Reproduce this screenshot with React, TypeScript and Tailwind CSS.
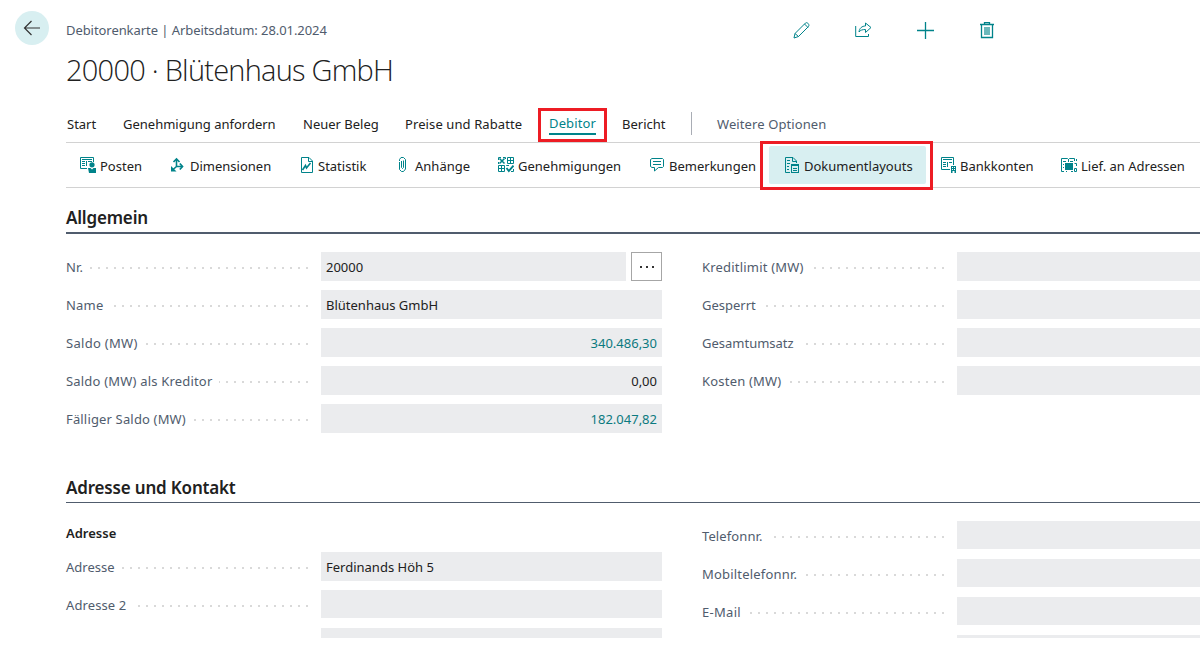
import type { ReactNode } from "react";

const Svg = ({ w, h, children }: { w: number; h: number; children: ReactNode }) => (
  <svg width={w} height={h} viewBox={`0 0 ${w} ${h}`} fill="none" stroke="#00838a" className="block shrink-0">
    {children}
  </svg>
);

const PostenIcon = () => (
  <Svg w={17} h={16}>
    <path d="M7 11.5H0.5V0.5H13.5V5" />
    <path d="M2 2.5h10M2 4.5h3M2 6.5h3M2 8.5h3M6.5 4v5M8 4.5h4" />
    <circle cx="12" cy="7.800" r="2.600" fill="#00838a" stroke="none" />
    <path d="M8 11h2.500l1.500 1.500 1.500-1.500h2.500V16H9z" fill="#00838a" stroke="none" />
  </Svg>
);

const DimensionIcon = () => (
  <Svg w={14} h={16}>
    <path d="M6.500 9.500V3M6.500 9.500L2.500 13M6.500 9.500H12" strokeWidth="1.600" />
    <path d="M3.500 5L6.500 2L9.500 5M9.800 6.500L12.500 9.500L9.800 12.500" strokeWidth="1.700" />
    <path d="M1 9V14.500H6.500Z" fill="#00838a" stroke="none" />
  </Svg>
);

const StatistikIcon = () => (
  <Svg w={13} h={16}>
    <path d="M0.500 0.500H8L11.500 4V15.500H0.500Z" />
    <path d="M7.500 0.500V4.500H11.500" />
    <path d="M1.500 13L4.500 8.500L5.500 11L9.500 6" strokeWidth="1.600" />
  </Svg>
);

const ClipIcon = () => (
  <Svg w={8} h={16}>
    <path d="M0.500 4V2.500L2 0.500H4.500L6.500 2.500V12L4.500 14.500H2.500L0.500 12.500V5M2.500 4V10.500L3.500 11.500L4.500 10.500V3.500" />
  </Svg>
);

const GenehmigungIcon = () => (
  <Svg w={16} h={16}>
    <path d="M0.500 3V0.500H3M5 0.500H7.500V2M0.500 5V7" />
    <path d="M1.500 1.500L6.500 6.500M6.500 1.500L1.500 6.500" strokeWidth="1.500" />
    <path d="M9.500 0.500H15.500V6.500H9.500ZM12.500 0.500V7M9 3.500H16" />
    <path d="M0.500 8.500H6.500V14.500H0.500ZM1 11.500H6M3.500 9V14" />
    <path d="M8.500 11L10.800 14L15.500 8.500" strokeWidth="1.900" />
    <path d="M8.500 9V8.500H11M15.500 12V14.500H13" />
  </Svg>
);

const KommentarIcon = () => (
  <Svg w={15} h={16}>
    <path d="M2 1.500H12.500L13.500 2.500V9.500L12.500 10.500H8.500L4.500 14V10.500H2L0.500 9.500V2.500Z" />
    <path d="M3 4.500H11M3 7.500H11" />
  </Svg>
);

const LayoutIcon = () => (
  <Svg w={15} h={16}>
    <path d="M5 15.500H0.500V0.500H8L11.500 4V6M7.500 0.500V4.500H11.500M2 3.500H5M2 6.500H5M2 9.500H4M2 12.500H4" />
    <rect x="6.500" y="7.500" width="7" height="8" />
    <path d="M6 8.500H14M8 11.500H12M8 13.500H12" />
  </Svg>
);

const BankIcon = () => (
  <Svg w={16} h={16}>
    <path d="M9 12.500H0.500V0.500H12.500V8M2 2.500H11M2 5.500H5M2 7.500H5M2 9.500H5M6.500 5V10M8 5.500H11" />
    <path d="M10 16V9H15V16H13.500V14H11.500V16Z" fill="#00838a" stroke="none" />
    <path d="M11.500 10V13M13.500 10V13" stroke="#fff" strokeDasharray="1 1" />
  </Svg>
);

const LieferIcon = () => (
  <Svg w={17} h={16}>
    <path d="M3 14.500H0.500V1.500H6.500L7.500 2.500L8.500 1.500H13.500V4M2 4.500H5M2 7.500H3M2 10.500H3M9 4.500H12M7.500 2V5" />
    <rect x="4" y="6" width="8" height="7" fill="#00838a" stroke="none" />
    <path d="M5 14.500H6M10 14.500H12M13.500 6.500H15.500V9M13.500 11.500H15.500V14.500H13.500ZM15.500 2V4" />
  </Svg>
);

const tabs = [
  { label: "Start", box: "w-[56px]" },
  { label: "Genehmigung anfordern", box: "w-[180px]" },
  { label: "Neuer Beleg", box: "w-[102px]" },
  { label: "Preise und Rabatte", box: "w-[133px] tracking-[0.1px]" },
];

const Action = ({ icon, box, gap, label }: { icon: ReactNode; box: string; gap: string; label: string }) => (
  <div className={`flex h-[38px] shrink-0 items-center ${box} ${gap}`}>
    {icon}
    <span className="pt-[2px]">{label}</span>
  </div>
);

const Field = ({ label, value, link, right, lookup, short, spacing = "" }: {
  label: string; value?: string; link?: boolean; right?: boolean; lookup?: boolean; short?: boolean; spacing?: string;
}) => (
  <div className="flex h-[38px] shrink-0 items-start">
    <div
      className={`flex h-[29px] w-[243px] shrink-0 items-center ${label ? "bg-[linear-gradient(90deg,#d9d9d9_2px,transparent_2px)] bg-[length:8px_2px] bg-[position:0_15px] bg-repeat-x" : ""}`}
    >
      <span className={`whitespace-nowrap bg-white pr-[7px] text-[#505c6d] ${spacing}`}>{label}</span>
    </div>
    <div className={`ml-3 flex flex-1 items-center bg-[#ebecee] px-[5px] ${short ? "h-[28px]" : "h-[29px]"} ${right ? "justify-end" : ""} ${link ? "text-[#0b7a80]" : "text-[#212121]"}`}>
      {value}
    </div>
    {lookup && (
      <div className="ml-[5px] flex h-[29px] w-[31px] items-center justify-center gap-1 border border-[#a6a6a6]">
        <i className="size-[2px] bg-[#333]" />
        <i className="size-[2px] bg-[#333]" />
        <i className="size-[2px] bg-[#333]" />
      </div>
    )}
  </div>
);

export default function App() {
  return (
    <div className="h-[648px] w-[1200px] overflow-hidden bg-white font-['Noto_Sans',sans-serif] text-[13px] leading-[18px] text-[#212121]">
      <div className="flex h-[638px] flex-col overflow-hidden">
        <header className="flex h-[105px] shrink-0">
          <div className="ml-[15px] mt-[11px] flex size-[34px] items-center justify-center rounded-full bg-[#d8eff1]">
            <svg width="18" height="16" viewBox="0 0 18 16" fill="none" stroke="#333" strokeWidth="1.200">
              <path d="M17 8H1.500M8.500 1L1.500 8L8.500 15" />
            </svg>
          </div>
          <div className="ml-[17px] w-[727px] pt-[21px]">
            <div className="tracking-[-0.065px] text-[#505c6d]">Debitorenkarte | Arbeitsdatum: 28.01.2024</div>
            <h1 className="mt-[11px] whitespace-nowrap font-['Open_Sans',sans-serif] text-[29px] font-light leading-[40px] tracking-[-0.76px]">20000 · Blütenhaus GmbH</h1>
          </div>
          <div className="flex h-[60px] items-center gap-[45px]">
            <Svg w={17} h={17}>
              <path d="M1 16L2 11.500L12.500 1C14 -0.300 17 2.500 15.500 4.500L5.500 14.500ZM11.500 2L15 5.500M2 11.500L5.500 14.500" />
            </Svg>
            <Svg w={17} h={17}>
              <path d="M0.700 4V14.500H13.500V12" />
              <path d="M4 10C4.500 6 7 4 10.500 4V1L16 5.500L10.500 10.500V7.500C7.500 7.500 5.500 8 4 10Z" />
            </Svg>
            <Svg w={17} h={17}><path d="M8.500 0V17M0 8.500H17" strokeWidth="1.300" /></Svg>
            <Svg w={17} h={17}>
              <path d="M1 2.500H15M5.500 2V0.700H10.500V2M2.500 3V15.500H13.500V3" strokeWidth="1.300" />
              <rect x="5" y="5" width="6" height="8" fill="#6bb8bb" stroke="none" />
            </Svg>
          </div>
        </header>

        <nav className="ml-[66px] flex h-[38px] shrink-0 items-center border-b border-[#d2d2d2] pl-px whitespace-nowrap">
          {tabs.map((t) => <div key={t.label} className={`shrink-0 ${t.box}`}>{t.label}</div>)}
          <div className="flex h-[34px] w-[69px] items-end justify-center self-end border-3 border-[#ed1c24] pb-[4px]">
            <span className="border-b-2 border-[#00838a] leading-[20px] tracking-[0.1px] text-[#00838a]">Debitor</span>
          </div>
          <div className="ml-[15px] w-[69px]">Bericht</div>
          <div className="h-[23px] w-px bg-[#a9adb5]" />
          <div className="ml-[25px] tracking-[0.1px] text-[#505c6d]">Weitere Optionen</div>
        </nav>

        <div className="ml-[66px] flex h-[45px] shrink-0 items-center border-b border-[#d2d2d2] pl-[14px] whitespace-nowrap">
          <Action icon={<PostenIcon />} box="w-[90px]" gap="gap-[3px]" label="Posten" />
          <Action icon={<DimensionIcon />} box="w-[131px]" gap="gap-[6px]" label="Dimensionen" />
          <Action icon={<StatistikIcon />} box="w-[98px]" gap="gap-[4px]" label="Statistik" />
          <Action icon={<ClipIcon />} box="w-[99px]" gap="gap-[8px]" label="Anhänge" />
          <Action icon={<GenehmigungIcon />} box="w-[152px]" gap="gap-[4px]" label="Genehmigungen" />
          <Action icon={<KommentarIcon />} box="w-[110px]" gap="gap-[4px]" label="Bemerkungen" />
          <div className="z-10 -my-1 flex h-[49px] w-[173px] shrink-0 items-start border-3 border-[#ed1c24] bg-white pl-[6px] pt-[2px]">
            <div className="flex h-[38px] w-[157px] items-center rounded-[2px] bg-[#d8eff1] pl-4">
              <Action icon={<LayoutIcon />} box="" gap="gap-[4px]" label="Dokumentlayouts" />
            </div>
          </div>
          <Action icon={<BankIcon />} box="w-[128px] pl-[8px]" gap="gap-[3px]" label="Bankkonten" />
          <Action icon={<LieferIcon />} box="" gap="gap-[3px]" label="Lief. an Adressen" />
        </div>

        <section className="ml-[66px] shrink-0">
          <h2 className="flex h-[46px] items-end border-b-2 border-[#505c6d] pb-[2px] text-[17px] font-semibold leading-6 tracking-[-0.18px]">Allgemein</h2>
          <div className="flex h-[236px] gap-[40px] pt-[18px]">
            <div className="flex w-[596px] flex-col">
              <Field label="Nr." value="20000" lookup spacing="tracking-[0.2px]" />
              <Field label="Name" value="Blütenhaus GmbH" spacing="tracking-[0.2px]" />
              <Field label="Saldo (MW)" value="340.486,30" link right spacing="tracking-[0.3px]" />
              <Field label="Saldo (MW) als Kreditor" value="0,00" right spacing="tracking-[0.19px]" />
              <Field label="Fälliger Saldo (MW)" value="182.047,82" link right spacing="tracking-[0.16px]" />
            </div>
            <div className="flex flex-1 flex-col">
              <Field label="Kreditlimit (MW)" spacing="tracking-[0.2px]" />
              <Field label="Gesperrt" />
              <Field label="Gesamtumsatz" />
              <Field label="Kosten (MW)" spacing="tracking-[0.2px]" />
            </div>
          </div>
        </section>

        <section className="ml-[66px] shrink-0">
          <h2 className="flex h-[33px] items-end border-b border-[#505c6d] pb-[2px] text-[17px] font-semibold leading-6 tracking-[-0.18px]">Adresse und Kontakt</h2>
          <div className="flex h-[180px] gap-[40px] pt-[18px]">
            <div className="flex w-[596px] flex-col">
              <h3 className="h-[31px] shrink-0 pt-[3px] font-semibold">Adresse</h3>
              <Field label="Adresse" value="Ferdinands Höh 5" />
              <Field label="Adresse 2" short spacing="tracking-[0.1px]" />
              <Field label="" />
            </div>
            <div className="flex flex-1 flex-col">
              <Field label="Telefonnr." short spacing="tracking-[0.1px]" />
              <Field label="Mobiltelefonnr." short spacing="tracking-[0.2px]" />
              <Field label="E-Mail" short spacing="tracking-[0.3px]" />
              <Field label="" />
            </div>
          </div>
        </section>
      </div>
    </div>
  );
}
